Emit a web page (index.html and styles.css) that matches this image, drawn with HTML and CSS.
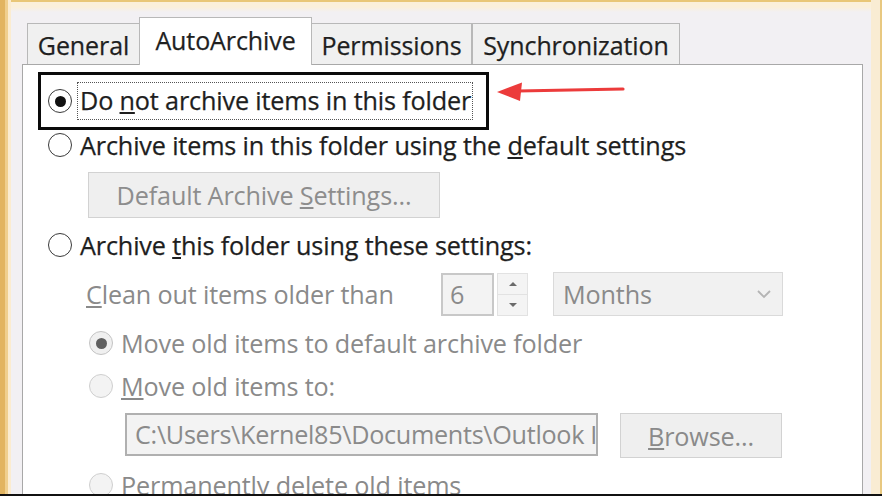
FILE: index.html
```html
<!DOCTYPE html>
<html>
<head>
<meta charset="utf-8">
<link rel="stylesheet" href="styles.css">
</head>
<body>
<div class="window">
  <div class="dialog">
    <div class="tabs">
      <div class="tab tab-general">General</div>
      <div class="tab tab-active">AutoArchive</div>
      <div class="tab tab-perm">Permissions</div>
      <div class="tab tab-sync">Synchronization</div>
    </div>
    <div class="panel">
      <div class="highlight">
        <span class="radio checked"></span>
        <span class="focus">Do <u>n</u>ot archive items in this folder</span>
      </div>
      <div class="row row-top">
        <span class="radio"></span>
        <span class="label">Archive items in this folder using the <u>d</u>efault settings</span>
      </div>
      <div class="btn btn-default"><span>Default Archive <u>S</u>ettings...</span></div>
      <div class="row row-top">
        <span class="radio"></span>
        <span class="label">Archive <u>t</u>his folder using these settings:</span>
      </div>
      <div class="clean">
        <span class="label dim clean-label"><u>C</u>lean out items older than</span>
        <span class="numbox">6</span>
        <span class="spin">
          <span class="spin-half"><svg width="12" height="8" viewBox="0 0 12 8"><path d="M2 6 L6 2 L10 6 Z" fill="#6a6a6a"/></svg></span>
          <span class="spin-half"><svg width="12" height="8" viewBox="0 0 12 8"><path d="M2 2 L6 6 L10 2 Z" fill="#6a6a6a"/></svg></span>
        </span>
        <span class="select">
          <span class="dim">Months</span>
          <svg class="chev" width="16" height="10" viewBox="0 0 16 10"><path d="M2 2 L8 8 L14 2" fill="none" stroke="#b4b4b4" stroke-width="1.8"/></svg>
        </span>
      </div>
      <div class="row row-sub row-first">
        <span class="radio dis-checked"></span>
        <span class="label dim">Move old items to default archive folder</span>
      </div>
      <div class="row row-sub">
        <span class="radio dis"></span>
        <span class="label dim"><u>M</u>ove old items to:</span>
      </div>
      <div class="pathrow">
        <span class="pathbox dim">C:\Users\Kernel85\Documents\Outlook I</span>
        <span class="btn btn-browse"><span><u>B</u>rowse...</span></span>
      </div>
      <div class="row row-sub">
        <span class="radio dis"></span>
        <span class="label dim">Permanently delete old items</span>
      </div>
    </div>
  </div>
  <svg class="arrow" width="130" height="24" viewBox="0 0 130 24">
    <path d="M22 12 L127 10" stroke="#ec3b3b" stroke-width="3.2" fill="none" stroke-linecap="round"/>
    <path d="M1 13 L26 3.5 L24 22 Z" fill="#ec3b3b"/>
  </svg>
</div>
</body>
</html>
```
FILE: styles.css
```css
html, body {
  margin: 0;
  padding: 0;
}
body {
  width: 882px;
  height: 496px;
  overflow: hidden;
  font-family: "Open Sans", "Noto Sans", sans-serif;
  color: #1e1e1e;
}
.window {
  position: relative;
  width: 882px;
  height: 496px;
  box-sizing: border-box;
  overflow: hidden;
  background:
    linear-gradient(to right, #e2b460 0 5px, #f0cf8e 5px 8px, #fbecd0 8px 11px, rgba(0,0,0,0) 11px calc(100% - 11px), #f9ecd3 calc(100% - 11px) calc(100% - 2px), #e8c880 calc(100% - 2px)),
    linear-gradient(to bottom, #e9c777 0 2px, #fbf0da 2px 7px, #f2f0f3 12px);
  border-bottom: 2px solid #111;
}
.dialog {
  padding: 17px 0 0 22px;
  width: 841px;
}
.tabs {
  display: flex;
  align-items: flex-end;
  padding-left: 5px;
  height: 47px;
  position: relative;
  z-index: 2;
}
.tab {
  box-sizing: border-box;
  height: 41px;
  background: #f0f0f0;
  border: 1.5px solid #b8b8b8;
  border-bottom: none;
  font-size: 25px;
  line-height: 40px;
  padding-top: 1px;
  text-align: center;
  color: #1f1f1f;
  letter-spacing: -0.1px;
  white-space: nowrap;
  -webkit-text-stroke: 0.25px #1f1f1f;
}
.tab-general { width: 112px; border-right: none; }
.tab-active {
  width: 173px;
  height: 48px;
  background: #fff;
  margin-bottom: -1px;
  line-height: 44px;
  padding-top: 0;
}
.tab-perm { width: 160px; border-left: none; }
.tab-sync { width: 208px; border-left: 1.5px solid #b8b8b8; }
.panel {
  box-sizing: border-box;
  height: 460px;
  background: #fff;
  border: 1.5px solid #a8a8a8;
  border-bottom: none;
  padding: 7px 0 0 0;
  display: flex;
  flex-direction: column;
  align-items: flex-start;
  font-size: 25.2px;
  letter-spacing: -0.15px;
}
.highlight {
  box-sizing: border-box;
  margin-left: 15px;
  width: 451px;
  height: 58px;
  border: 3px solid #0a0a0a;
  display: flex;
  align-items: center;
  padding-left: 7px;
  gap: 5px;
}
.focus {
  box-sizing: border-box;
  height: 38px;
  line-height: 34px;
  padding: 0 1px 0 2px;
  border: 1.5px dotted #555;
  white-space: nowrap;
  -webkit-text-stroke: 0.25px #1e1e1e;
}
.radio {
  box-sizing: border-box;
  width: 24px;
  height: 24px;
  flex: none;
  border-radius: 50%;
  border: 1.8px solid #3a3a3a;
  background: #fff;
  display: inline-flex;
  align-items: center;
  justify-content: center;
}
.radio.checked::after {
  content: "";
  width: 11px;
  height: 11px;
  border-radius: 50%;
  background: #111;
}
.radio.dis {
  border-color: #cfcfcf;
  background: #f3f3f3;
}
.radio.dis-checked {
  border-color: #c4c4c4;
  background: #f0f0f0;
}
.radio.dis-checked::after {
  content: "";
  width: 11px;
  height: 11px;
  border-radius: 50%;
  background: #606060;
}
.row {
  display: flex;
  align-items: center;
  gap: 8px;
  height: 30px;
  white-space: nowrap;
}
.row-top {
  margin-left: 25px;
}
.row-top .label {
  -webkit-text-stroke: 0.25px #1e1e1e;
}
.row-top + .btn-default {
  margin-top: 12px;
}
.btn {
  box-sizing: border-box;
  display: flex;
  align-items: center;
  justify-content: center;
  background: #efefef;
  border: 1.5px solid #d2d2d2;
  color: #8d8d8d;
  white-space: nowrap;
}
.btn-default {
  margin-left: 65px;
  width: 352px;
  height: 46px;
}
.btn-default + .row {
  margin-top: 12px;
}
.label {
  line-height: 30px;
}
.dim {
  color: #8a8a8a;
}
.clean {
  display: flex;
  align-items: center;
  margin-top: 12px;
  margin-left: 63px;
  height: 44px;
}
.clean-label {
  width: 355px;
  white-space: nowrap;
}
.numbox {
  box-sizing: border-box;
  width: 53px;
  height: 43px;
  border: 2px solid #c8c8c8;
  background: #f3f3f3;
  color: #8a8a8a;
  padding-left: 7px;
  line-height: 38px;
}
.spin {
  box-sizing: border-box;
  margin-left: 3px;
  width: 31px;
  height: 43px;
  display: flex;
  flex-direction: column;
  border: 1px solid #e2e2e2;
  background: #f4f4f4;
}
.spin-half {
  flex: 1;
  display: flex;
  align-items: center;
  justify-content: center;
}
.spin-half + .spin-half {
  border-top: 1px solid #e2e2e2;
}
.select {
  box-sizing: border-box;
  margin-left: 25px;
  width: 230px;
  height: 44px;
  border: 1.5px solid #dadada;
  background: #f1f1f1;
  display: flex;
  align-items: center;
  justify-content: space-between;
  padding: 0 10px 0 9px;
}
.row-sub {
  margin-left: 66px;
  margin-top: 13px;
}
.row-first {
  margin-top: 12px;
}
.pathrow {
  display: flex;
  align-items: flex-start;
  margin-top: 12px;
  margin-left: 102px;
  height: 45px;
}
.pathbox {
  box-sizing: border-box;
  width: 473px;
  height: 43px;
  border: 2px solid #b0b0b0;
  background: #f3f3f3;
  padding-left: 8px;
  line-height: 39px;
  overflow: hidden;
  white-space: nowrap;
  letter-spacing: -0.3px;
}
.btn-browse {
  margin-left: 22px;
  width: 162px;
  height: 45px;
  color: #8a8a8a;
}
.pathrow + .row-sub {
  margin-top: 12px;
}
.arrow {
  position: absolute;
  left: 496px;
  top: 79px;
}
```
